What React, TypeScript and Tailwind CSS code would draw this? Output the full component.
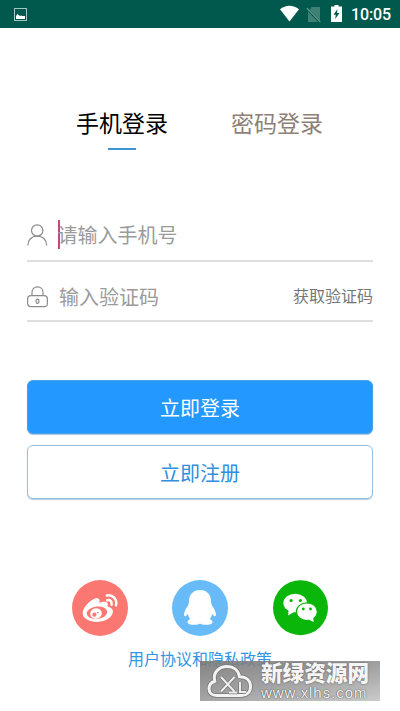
const fontClass = "font-['Roboto','Noto_Sans_CJK_SC',sans-serif]"

function StatusBar() {
  return (
    <header className="flex h-7 shrink-0 items-center justify-between bg-[#00594c] pl-3.5 pr-[9px] text-white">
      <svg width="13" height="13" viewBox="0 0 13 13" fill="none">
        <rect x="0.5" y="0.5" width="12" height="12" stroke="#9ccabf" />
        <path d="M2 11V8l1.500-2L6 8l1-.5L8.500 8H11v3z" fill="#fff" />
      </svg>
      <div className="flex items-center">
        <svg className="-mt-0.5" width="19" height="17" viewBox="0 0 19 17">
          <path d="M0 4.200C5.500-.5 13.500-.5 19 4.200L9.500 16.500z" fill="#fff" />
        </svg>
        <svg className="ml-[7px]" width="15" height="17" viewBox="0 0 15 17">
          <path d="M5.500 1H14v13.500L4 4zM2 5.500l10 10.500H2z" fill="#3f8275" />
          <path d="M.8 2l13.500 14" stroke="#5c978b" strokeWidth="1.200" />
        </svg>
        <svg className="-mt-0.5 ml-[10px]" width="11" height="17" viewBox="0 0 11 17">
          <path d="M3.500 0h4v1.500H11V17H0V1.500h3.500z" fill="#fff" />
          <path d="M6.500 4L2.500 9.700h2.300L4.200 14 8.500 8H6z" fill="#00594c" />
        </svg>
        <span className="ml-[9px] pt-px text-base font-medium leading-7 tracking-[-0.1px]">10:05</span>
      </div>
    </header>
  )
}

function UserIcon() {
  return (
    <svg width="21" height="22" viewBox="0 0 21 22" fill="none" stroke="#8c8c8c" strokeWidth="1.200">
      <circle cx="10.200" cy="6.500" r="5.700" />
      <path d="M.8 21.500c0-5.500 3.600-9.300 9.400-9.300s9.500 3.800 9.500 9.300" />
    </svg>
  )
}

function LockIcon() {
  return (
    <svg width="21" height="22" viewBox="0 0 21 22" fill="none" stroke="#8c8c8c" strokeWidth="1.200">
      <path d="M5 9.500V6.300C5 3 7.300.8 10.500.8S16 3 16 6.300v3.200" />
      <rect x="0.600" y="9.700" width="19.800" height="11" rx="3.500" />
      <rect x="9.100" y="13.200" width="2.800" height="4.200" rx="1.400" />
    </svg>
  )
}

function WeiboIcon() {
  return (
    <svg width="56" height="56" viewBox="0 0 56 56">
      <circle cx="28" cy="28" r="28" fill="#fb7872" />
      <path
        d="M10.700 33.200c0-5.200 6.500-12.200 12.300-14.600 3.500-1.400 5.400.5 4.300 4.200 2.500-1 6.700-2 8-.1.800 1.100.5 2.500 0 3.700 3.200.9 5.600 2.300 5.600 5.200 0 5.400-7.300 10.300-15.500 10.300-8 0-14.700-3.300-14.700-8.700z"
        fill="#fff"
      />
      <ellipse cx="25" cy="32.800" rx="10.300" ry="6.300" transform="rotate(-7 25 32.800)" fill="#fb7872" />
      <ellipse cx="24" cy="33.500" rx="5.900" ry="5.200" transform="rotate(-18 24 33.500)" fill="#fff" />
      <circle cx="22.400" cy="34.700" r="2.100" fill="#fb7872" />
      <circle cx="25.900" cy="32.600" r="0.900" fill="#fb7872" />
      <g fill="none" stroke="#fff" strokeWidth="2.500" strokeLinecap="round">
        <path d="M34.800 15.500c5.800-1.300 10.700 3.800 9.200 9.900" />
        <path d="M35.300 20.200c3-.6 5 1.600 4.300 4.500" />
      </g>
    </svg>
  )
}

function QQIcon() {
  return (
    <svg width="56" height="56" viewBox="0 0 56 56">
      <circle cx="28" cy="28" r="28" fill="#69bbf8" />
      <path
        d="M28 10c-6.800 0-11 4.700-11 11.200 0 1.300-.2 2.700-.8 4C13.800 28.500 12 32 12.100 34.500c.1 2.300 1 2.400 3.700-.6.400 2 1.200 3.700 2.400 5.200-1.800.8-3 2-2.600 3.600.6 2.600 9.700 2.900 12.400.7 2.700 2.200 11.800 1.900 12.400-.7.400-1.600-.8-2.800-2.600-3.600 1.200-1.500 2-3.200 2.400-5.200 2.700 3 3.600 2.900 3.700.6.100-2.500-1.700-6-4.100-9.300-.6-1.300-.8-2.700-.8-4C39 14.700 34.800 10 28 10z"
        fill="#fff"
      />
    </svg>
  )
}

function WechatIcon() {
  return (
    <svg width="56" height="56" viewBox="0 0 56 56">
      <circle cx="28.500" cy="27.700" r="27.500" fill="#0bb60b" />
      <ellipse cx="23.200" cy="23" rx="11.800" ry="9.300" fill="#fff" />
      <path d="M16.500 29.500l-.3 5.900 6.300-3.600z" fill="#fff" />
      <circle cx="19.100" cy="20.500" r="1.600" fill="#0bb60b" />
      <circle cx="28.400" cy="20.500" r="1.600" fill="#0bb60b" />
      <ellipse cx="34.900" cy="31.700" rx="10.500" ry="8.900" fill="#fff" stroke="#0bb60b" strokeWidth="1.200" />
      <path d="M36.500 39.500l5.200 2.600-.7-5.500z" fill="#fff" />
      <circle cx="31.300" cy="29" r="1.400" fill="#0bb60b" />
      <circle cx="38.500" cy="29" r="1.400" fill="#0bb60b" />
    </svg>
  )
}

// cloud outline with an X and an L inside, drawn twice for the grey edge
const cloudPath =
  "M9.500 31.500C4.500 31.500 2 28.500 2 24.800c0-3.800 2.500-6.600 5.800-7.600C5.500 8 12.500 2.500 20 2.500c6.500 0 11.500 3.800 12.500 10.200 7 0 11 4 11 9.800s-4 9-9 9z"
const letterMarks = "M14 13l13.500 14.500M27.500 13L14 27.500M22 28.500h8M33 18v10h6"

function Watermark() {
  return (
    <div className="absolute left-[200px] top-[661px] flex h-10 w-[180px] items-center bg-linear-170 from-[#777777]/90 via-[#979797]/90 to-[#c4c4c4]/90">
      <svg className="ml-[7px] shrink-0" width="46" height="35" viewBox="0 0 46 35" fill="none">
        <path d={cloudPath} stroke="#777" strokeWidth="4.500" />
        <path d={cloudPath} stroke="#f2f2f2" strokeWidth="3" />
        <path d={letterMarks} stroke="#777" strokeWidth="3.400" />
        <path d={letterMarks} stroke="#eee" strokeWidth="2" />
      </svg>
      <div className="ml-2 flex flex-col whitespace-nowrap text-[#f5f5f5]">
        <span className="text-[21.600px] font-black leading-[24px] [text-shadow:0_0_2px_#555]">新绿资源网</span>
        <span className="font-['Liberation_Sans',sans-serif] text-[15px] leading-[14px] tracking-[0.95px] [text-shadow:0_0_1px_#444,0_0_1px_#444]">
          www.xlhs.com
        </span>
      </div>
    </div>
  )
}

export default function App() {
  return (
    <div className={`relative flex h-[711px] w-[400px] flex-col overflow-hidden bg-white ${fontClass}`}>
      <StatusBar />

      <main className="flex flex-col px-[27px]">
        <nav className="mt-[79px] flex pl-[49px] text-[23px] leading-9">
          <button className="flex w-[92px] flex-col items-center text-black">
            手机登录
            <span className="mt-[5px] h-0.5 w-7 bg-[#3b94d6]" />
          </button>
          <button className="ml-[63px] self-start text-[#8e7f77]">密码登录</button>
        </nav>

        <div className="mt-[60px] flex h-[52px] items-center border-b-2 border-[#dedede]">
          <UserIcon />
          <span className="-mt-0.5 ml-[10px] h-[29px] w-[1.500px] bg-[#c4477f]" />
          <span className="-ml-0.5 pt-0.5 text-xl text-[#9b9b9b]">请输入手机号</span>
        </div>

        <div className="flex h-[60px] items-center border-b-2 border-[#dedede] pt-3">
          <LockIcon />
          <span className="ml-[11px] pt-px text-xl text-[#9b9b9b]">输入验证码</span>
          <button className="ml-auto text-base text-[#777]">获取验证码</button>
        </div>

        <button className="mt-[58px] h-[54px] rounded-md border border-[#4ba3e6] bg-[#2398ff] pt-[3px] text-xl text-white shadow-[0_1px_1px_#a9c6dd]">
          立即登录
        </button>
        <button className="mt-[11px] h-[54px] rounded-md border-[1.500px] border-[#94c1e0] bg-white pt-[3px] text-xl text-[#318fde] shadow-[0_1px_1px_#b4cbdc]">
          立即注册
        </button>

        <div className="mt-[81px] flex justify-between px-[45px]">
          <WeiboIcon />
          <QQIcon />
          <WechatIcon />
        </div>

        <a className="mt-3 text-center text-base leading-6 text-[#3495e2]">用户协议和隐私政策</a>
      </main>

      <Watermark />
    </div>
  )
}
